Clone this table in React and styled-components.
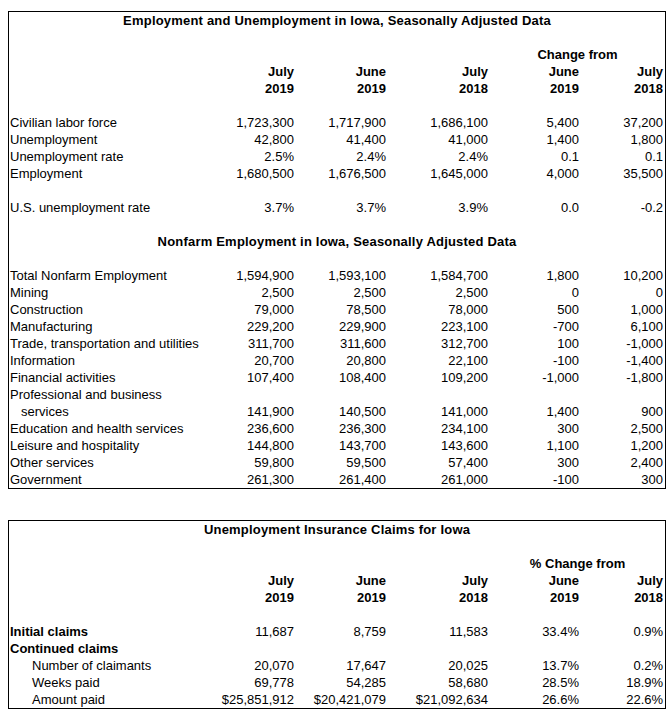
import React from "react";
import { createGlobalStyle, styled } from "styled-components";

const GlobalStyle = createGlobalStyle`
  body {
    margin: 0;
    background: #fff;
    color: #000;
  }
`;

const laborRows = [
  ["Civilian labor force", "1,723,300", "1,717,900", "1,686,100", "5,400", "37,200"],
  ["Unemployment", "42,800", "41,400", "41,000", "1,400", "1,800"],
  ["Unemployment rate", "2.5%", "2.4%", "2.4%", "0.1", "0.1"],
  ["Employment", "1,680,500", "1,676,500", "1,645,000", "4,000", "35,500"],
];

const nonfarmRows = [
  ["Total Nonfarm Employment", "1,594,900", "1,593,100", "1,584,700", "1,800", "10,200"],
  ["Mining", "2,500", "2,500", "2,500", "0", "0"],
  ["Construction", "79,000", "78,500", "78,000", "500", "1,000"],
  ["Manufacturing", "229,200", "229,900", "223,100", "-700", "6,100"],
  ["Trade, transportation and utilities", "311,700", "311,600", "312,700", "100", "-1,000"],
  ["Information", "20,700", "20,800", "22,100", "-100", "-1,400"],
  ["Financial activities", "107,400", "108,400", "109,200", "-1,000", "-1,800"],
  ["Professional and business"],
  ["services", "141,900", "140,500", "141,000", "1,400", "900", 1],
  ["Education and health services", "236,600", "236,300", "234,100", "300", "2,500"],
  ["Leisure and hospitality", "144,800", "143,700", "143,600", "1,100", "1,200"],
  ["Other services", "59,800", "59,500", "57,400", "300", "2,400"],
  ["Government", "261,300", "261,400", "261,000", "-100", "300"],
];

const claimRows = [
  ["Initial claims", "11,687", "8,759", "11,583", "33.4%", "0.9%", 0, true],
  ["Continued claims", "", "", "", "", "", 0, true],
  ["Number of claimants", "20,070", "17,647", "20,025", "13.7%", "0.2%", 2],
  ["Weeks paid", "69,778", "54,285", "58,680", "28.5%", "18.9%", 2],
  ["Amount paid", "$25,851,912", "$20,421,079", "$21,092,634", "26.6%", "22.6%", 2],
];

const Row = ({ cells }) => {
  const [label, ...rest] = cells;
  const values = rest.slice(0, 5);
  const indent = rest[5] || 0;
  const bold = rest[6];
  return (
    <tr>
      <S.Label indent={indent} bold={bold}>{label}</S.Label>
      {[0, 1, 2, 3, 4].map((i) => (
        <S.Num key={i}>{values[i] || ""}</S.Num>
      ))}
    </tr>
  );
};

const Blank = () => (
  <tr>
    <S.Label colSpan={6}>&nbsp;</S.Label>
  </tr>
);

const Heads = ({ change }) => (
  <>
    <tr>
      <S.Label colSpan={4}>&nbsp;</S.Label>
      <S.Head colSpan={2} center>{change}</S.Head>
    </tr>
    <tr>
      <S.Label />
      <S.Head>July</S.Head>
      <S.Head>June</S.Head>
      <S.Head>July</S.Head>
      <S.Head>June</S.Head>
      <S.Head>July</S.Head>
    </tr>
    <tr>
      <S.Label />
      <S.Head>2019</S.Head>
      <S.Head>2019</S.Head>
      <S.Head>2018</S.Head>
      <S.Head>2019</S.Head>
      <S.Head>2018</S.Head>
    </tr>
  </>
);

const Cols = () => (
  <colgroup>
    <col style={{ width: 207 }} />
    <col style={{ width: 80 }} />
    <col style={{ width: 92 }} />
    <col style={{ width: 102 }} />
    <col style={{ width: 91 }} />
    <col style={{ width: 84 }} />
  </colgroup>
);

export default function App() {
  return (
    <S.Page>
      <GlobalStyle />
      <S.Table>
        <Cols />
        <tbody>
          <tr>
            <S.Title colSpan={6}>Employment and Unemployment in Iowa, Seasonally Adjusted Data</S.Title>
          </tr>
          <Blank />
          <Heads change="Change from" />
          <Blank />
          {laborRows.map((r) => (
            <Row key={r[0]} cells={r} />
          ))}
          <Blank />
          <Row cells={["U.S. unemployment rate", "3.7%", "3.7%", "3.9%", "0.0", "-0.2"]} />
          <Blank />
          <tr>
            <S.Title colSpan={6}>Nonfarm Employment in Iowa, Seasonally Adjusted Data</S.Title>
          </tr>
          <Blank />
          {nonfarmRows.map((r) => (
            <Row key={r[0]} cells={[...r.slice(0, 6), r[6] ? 1 : 0]} />
          ))}
        </tbody>
      </S.Table>

      <S.Table>
        <Cols />
        <tbody>
          <tr>
            <S.Title colSpan={6}>Unemployment Insurance Claims for Iowa</S.Title>
          </tr>
          <Blank />
          <Heads change="% Change from" />
          <Blank />
          {claimRows.map((r) => (
            <Row key={r[0]} cells={r} />
          ))}
        </tbody>
      </S.Table>
    </S.Page>
  );
}

const S = {
  Page: styled.div`
    display: flex;
    flex-direction: column;
    gap: 31px;
    padding: 11px 0 0 8px;
    font-family: "Liberation Sans", Arial, sans-serif;
    font-size: 13px;
  `,

  Table: styled.table`
    width: 658px;
    table-layout: fixed;
    border: 1px solid #000;
    border-collapse: separate;
    border-spacing: 0;
    font-family: inherit;
    font-size: 13px;
  `,

  Label: styled.td`
    height: 17px;
    padding: 0 0 0 ${(props) => (props.indent === 2 ? 23 : props.indent === 1 ? 12 : 1)}px;
    line-height: 17px;
    white-space: nowrap;
    text-align: left;
    font-weight: ${(props) => (props.bold ? "bold" : "normal")};
  `,

  Num: styled.td`
    height: 17px;
    padding: 0 2px 0 0;
    line-height: 17px;
    white-space: nowrap;
    text-align: right;
  `,

  Head: styled.td`
    height: 17px;
    padding: ${(props) => (props.center ? "0" : "0 2px 0 0")};
    line-height: 17px;
    white-space: nowrap;
    text-align: ${(props) => (props.center ? "center" : "right")};
    font-weight: bold;
  `,

  Title: styled.td`
    height: 17px;
    padding: 0;
    line-height: 16px;
    white-space: nowrap;
    text-align: center;
    font-weight: bold;
    letter-spacing: 0.2px;
  `,
};
